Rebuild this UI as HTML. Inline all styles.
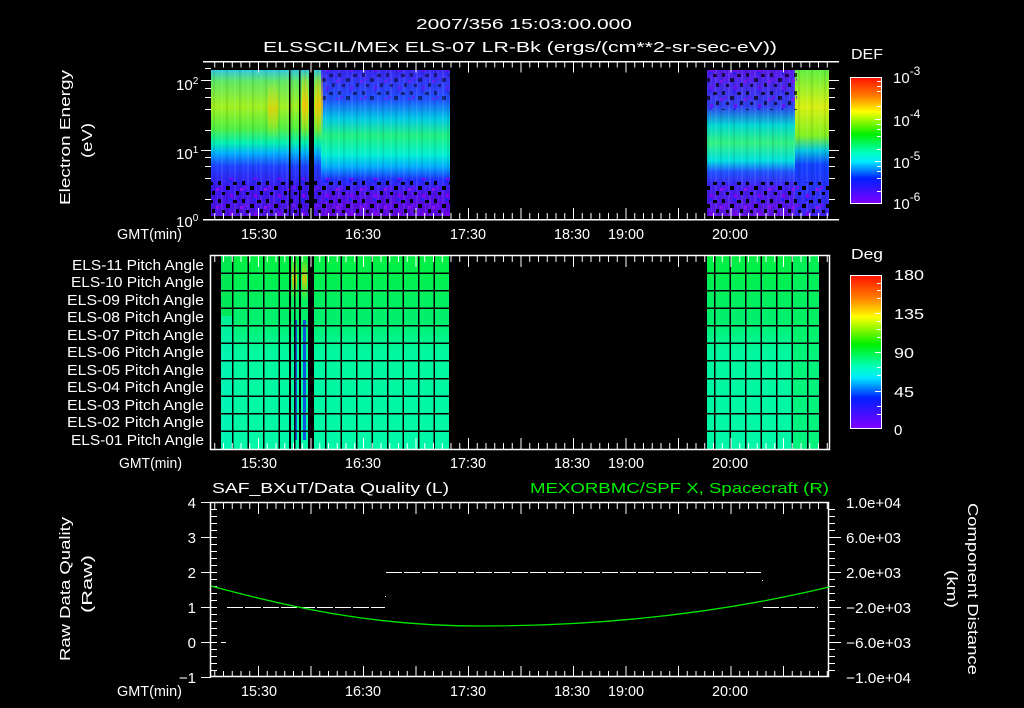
<!DOCTYPE html>
<html><head><meta charset="utf-8"><style>
html,body{margin:0;padding:0;background:#000;width:1024px;height:708px;overflow:hidden}
svg{display:block}
text{font-family:"Liberation Sans",sans-serif;fill:#fff;font-size:15px}
</style></head><body>
<svg width="1024" height="708" viewBox="0 0 1024 708">
<defs>
<linearGradient id="cb" x1="0" y1="0" x2="0" y2="1">
<stop offset="0" stop-color="#ff1000"/><stop offset="0.15" stop-color="#ff8000"/><stop offset="0.27" stop-color="#ffff00"/><stop offset="0.45" stop-color="#00f000"/><stop offset="0.6" stop-color="#00ffc0"/><stop offset="0.67" stop-color="#00e8ff"/><stop offset="0.8" stop-color="#0020ff"/><stop offset="1" stop-color="#8000ff"/>
</linearGradient>
<linearGradient id="gA" x1="0" y1="0" x2="0" y2="1">
<stop offset="0" stop-color="#30c8e0"/><stop offset="0.08" stop-color="#60e860"/><stop offset="0.25" stop-color="#a0f020"/><stop offset="0.4" stop-color="#50f040"/><stop offset="0.5" stop-color="#00f0b0"/><stop offset="0.57" stop-color="#00b0ff"/><stop offset="0.66" stop-color="#2040ff"/><stop offset="0.8" stop-color="#3818f0"/><stop offset="1" stop-color="#5010e0"/>
</linearGradient>
<linearGradient id="gB" x1="0" y1="0" x2="0" y2="1">
<stop offset="0" stop-color="#3a28f0"/><stop offset="0.2" stop-color="#2050ff"/><stop offset="0.33" stop-color="#00c8e8"/><stop offset="0.45" stop-color="#20f080"/><stop offset="0.58" stop-color="#00f0d0"/><stop offset="0.66" stop-color="#00b0ff"/><stop offset="0.75" stop-color="#2030ff"/><stop offset="0.85" stop-color="#5010e8"/><stop offset="1" stop-color="#6008e0"/>
</linearGradient>
<linearGradient id="gC" x1="0" y1="0" x2="0" y2="1">
<stop offset="0" stop-color="#5818e8"/><stop offset="0.25" stop-color="#3040f0"/><stop offset="0.38" stop-color="#00d8d0"/><stop offset="0.5" stop-color="#30f080"/><stop offset="0.62" stop-color="#00e0e0"/><stop offset="0.7" stop-color="#2050ff"/><stop offset="0.8" stop-color="#4020f0"/><stop offset="1" stop-color="#6010e0"/>
</linearGradient>
<linearGradient id="gD" x1="0" y1="0" x2="0" y2="1">
<stop offset="0" stop-color="#60f040"/><stop offset="0.25" stop-color="#d8f010"/><stop offset="0.45" stop-color="#80f020"/><stop offset="0.55" stop-color="#00c8e0"/><stop offset="0.65" stop-color="#1040ff"/><stop offset="1" stop-color="#4020f0"/>
</linearGradient>
<linearGradient id="hot" x1="0" y1="0" x2="0" y2="1">
<stop offset="0" stop-color="#ffe000" stop-opacity="0"/><stop offset="0.5" stop-color="#ffc000" stop-opacity="0.8"/><stop offset="1" stop-color="#ffe000" stop-opacity="0"/>
</linearGradient>
<linearGradient id="pa" x1="0" y1="0" x2="0" y2="1">
<stop offset="0" stop-color="#00f040"/><stop offset="0.35" stop-color="#00f070"/><stop offset="0.5" stop-color="#00f8a0"/><stop offset="1" stop-color="#00f8a8"/>
</linearGradient>
<pattern id="str" x="0" y="0" width="13" height="10" patternUnits="userSpaceOnUse">
<rect x="0" y="0" width="2" height="10" fill="#fff" opacity="0.08"/><rect x="5" y="0" width="2" height="10" fill="#000" opacity="0.08"/><rect x="9" y="0" width="1" height="10" fill="#fff" opacity="0.06"/>
</pattern>
<pattern id="spk" x="0" y="0" width="24" height="18" patternUnits="userSpaceOnUse">
<rect x="2" y="1" width="3" height="4" fill="#000"/><rect x="10" y="6" width="4" height="4" fill="#000"/><rect x="17" y="2" width="4" height="3" fill="#000"/><rect x="6" y="12" width="3" height="3" fill="#000"/><rect x="20" y="11" width="3" height="4" fill="#000"/><rect x="14" y="14" width="3" height="4" fill="#8000f0"/><rect x="0" y="8" width="3" height="3" fill="#9010f0"/><rect x="13" y="0" width="3" height="3" fill="#2020f0"/><rect x="4" y="6" width="3" height="3" fill="#7010f0"/>
</pattern>
</defs>

<text x="416" y="29" textLength="216" lengthAdjust="spacingAndGlyphs" font-size="16">2007/356 15:03:00.000</text>
<text x="263" y="52" textLength="514" lengthAdjust="spacingAndGlyphs" font-size="16">ELSSCIL/MEx ELS-07 LR-Bk  (ergs/(cm**2-sr-sec-eV))</text>

<!-- top spectrogram -->
<rect x="211" y="70" width="110" height="146" fill="url(#gA)"/>
<rect x="321" y="70" width="129" height="146" fill="url(#gB)"/>
<rect x="211" y="70" width="239" height="146" fill="url(#str)"/>
<rect x="211" y="178" width="239" height="38" fill="url(#spk)"/>
<rect x="321" y="70" width="129" height="30" fill="url(#spk)" opacity="0.5"/>
<rect x="268" y="80" width="10" height="60" fill="url(#hot)" opacity="0.7"/>
<rect x="302" y="70" width="6" height="70" fill="url(#hot)"/>
<rect x="315" y="70" width="8" height="70" fill="url(#hot)"/>
<rect x="289" y="70" width="1.5" height="146" fill="#000"/>
<rect x="299" y="70" width="1.5" height="146" fill="#000"/>
<rect x="309" y="70" width="5" height="146" fill="#000"/>
<rect x="707" y="70" width="88" height="146" fill="url(#gC)"/>
<rect x="795" y="70" width="34" height="146" fill="url(#gD)"/>
<rect x="707" y="70" width="122" height="146" fill="url(#str)"/>
<rect x="707" y="70" width="90" height="40" fill="url(#spk)" opacity="0.7"/>
<rect x="707" y="182" width="122" height="34" fill="url(#spk)"/>
<!-- top axes -->
<g fill="#fff">
<rect x="203" y="61" width="636" height="1.5"/>
<rect x="203" y="219" width="636" height="1.5"/>
</g>
<g stroke="#fff" fill="none">
<path d="M214.25 64.5 H830" stroke-width="6" stroke-dasharray="1 7.75"/>
<path d="M258 67 H830" stroke-width="11" stroke-dasharray="1 51.5"/>
<path d="M214.25 216 H830" stroke-width="6" stroke-dasharray="1 7.75"/>
<path d="M258 213.5 H830" stroke-width="11" stroke-dasharray="1 51.5"/>
</g>
<g fill="#fff">
<rect x="201" y="80" width="10" height="1"/><rect x="205" y="68" width="6" height="1"/><rect x="205" y="88" width="6" height="1"/><rect x="205" y="97" width="6" height="1"/><rect x="205" y="109" width="6" height="1"/><rect x="205" y="130" width="6" height="1"/>
<rect x="201" y="150" width="10" height="1"/><rect x="205" y="157" width="6" height="1"/><rect x="205" y="166" width="6" height="1"/><rect x="205" y="178" width="6" height="1"/><rect x="205" y="199" width="6" height="1"/>
<rect x="829" y="80" width="10" height="1"/><rect x="829" y="88" width="6" height="1"/><rect x="829" y="97" width="6" height="1"/><rect x="829" y="109" width="6" height="1"/><rect x="829" y="130" width="6" height="1"/>
<rect x="829" y="150" width="10" height="1"/><rect x="829" y="157" width="6" height="1"/><rect x="829" y="166" width="6" height="1"/><rect x="829" y="178" width="6" height="1"/><rect x="829" y="199" width="6" height="1"/>
</g>
<text x="176" y="90" font-size="14">10<tspan dy="-6" font-size="10">2</tspan></text>
<text x="176" y="159" font-size="14">10<tspan dy="-6" font-size="10">1</tspan></text>
<text x="176" y="227" font-size="14">10<tspan dy="-6" font-size="10">0</tspan></text>
<text transform="translate(70,205) rotate(-90)" textLength="135" lengthAdjust="spacingAndGlyphs">Electron Energy</text>
<text transform="translate(92,158) rotate(-90)" textLength="35" lengthAdjust="spacingAndGlyphs">(eV)</text>
<g>
<text x="117" y="239" textLength="65" lengthAdjust="spacingAndGlyphs">GMT(min)</text>
<text x="241" y="239" textLength="36" lengthAdjust="spacingAndGlyphs">15:30</text><text x="345" y="239" textLength="36" lengthAdjust="spacingAndGlyphs">16:30</text><text x="450" y="239" textLength="36" lengthAdjust="spacingAndGlyphs">17:30</text><text x="554" y="239" textLength="36" lengthAdjust="spacingAndGlyphs">18:30</text><text x="608" y="239" textLength="36" lengthAdjust="spacingAndGlyphs">19:00</text><text x="712" y="239" textLength="36" lengthAdjust="spacingAndGlyphs">20:00</text>
</g>
<!-- DEF colorbar -->
<text x="851" y="59" textLength="32" lengthAdjust="spacingAndGlyphs" font-size="16">DEF</text>
<rect x="850.5" y="77.5" width="31" height="126" fill="url(#cb)" stroke="#fff" stroke-width="1"/>
<g fill="#fff"><rect x="877" y="81" width="4" height="1"/><rect x="877" y="86" width="4" height="1"/><rect x="877" y="91" width="4" height="1"/><rect x="877" y="106" width="4" height="1"/><rect x="875" y="119" width="6" height="1"/><rect x="877" y="124" width="4" height="1"/><rect x="877" y="129" width="4" height="1"/><rect x="877" y="136" width="4" height="1"/><rect x="877" y="149" width="4" height="1"/><rect x="875" y="161" width="6" height="1"/><rect x="877" y="166" width="4" height="1"/><rect x="877" y="171" width="4" height="1"/><rect x="877" y="178" width="4" height="1"/><rect x="877" y="191" width="4" height="1"/></g>
<g font-size="16"><text x="893" y="83">10<tspan dy="-8" font-size="12">-3</tspan></text>
<text x="893" y="126">10<tspan dy="-8" font-size="12">-4</tspan></text>
<text x="893" y="168">10<tspan dy="-8" font-size="12">-5</tspan></text>
<text x="893" y="209">10<tspan dy="-8" font-size="12">-6</tspan></text></g>

<!-- pitch angle panel -->
<rect x="221" y="256" width="228" height="193" fill="url(#pa)"/>
<rect x="221" y="256" width="12" height="193" fill="#00f0c0" opacity="0.5"/>
<rect x="221" y="256" width="12" height="60" fill="#00e020" opacity="0.5"/>
<rect x="707" y="256" width="112" height="193" fill="url(#pa)"/>
<rect x="792" y="256" width="27" height="193" fill="#00f060" opacity="0.6"/>
<rect x="292" y="256" width="5" height="45" fill="url(#hot)"/><rect x="302" y="256" width="5" height="45" fill="url(#hot)"/>
<rect x="294" y="320" width="3" height="120" fill="#1030f0" opacity="0.8"/><rect x="303" y="320" width="3" height="120" fill="#1030f0" opacity="0.8"/>
<rect x="289" y="256" width="2" height="193" fill="#000"/><rect x="299" y="256" width="2" height="193" fill="#000"/><rect x="308" y="256" width="6" height="193" fill="#000"/>
<!-- grid -->
<g stroke="#000" fill="none">
<path d="M232 352.5 H449" stroke-width="193" stroke-dasharray="1.5 14"/>
<path d="M714 352.5 H819" stroke-width="193" stroke-dasharray="1.5 14"/>
</g>
<g fill="#000">
<rect x="221" y="272.5" width="228" height="1.5"/><rect x="221" y="290" width="228" height="1.5"/><rect x="221" y="307.5" width="228" height="1.5"/><rect x="221" y="325" width="228" height="1.5"/><rect x="221" y="342.5" width="228" height="1.5"/><rect x="221" y="360" width="228" height="1.5"/><rect x="221" y="378" width="228" height="1.5"/><rect x="221" y="395.5" width="228" height="1.5"/><rect x="221" y="413" width="228" height="1.5"/><rect x="221" y="430.5" width="228" height="1.5"/>
<rect x="707" y="272.5" width="112" height="1.5"/><rect x="707" y="290" width="112" height="1.5"/><rect x="707" y="307.5" width="112" height="1.5"/><rect x="707" y="325" width="112" height="1.5"/><rect x="707" y="342.5" width="112" height="1.5"/><rect x="707" y="360" width="112" height="1.5"/><rect x="707" y="378" width="112" height="1.5"/><rect x="707" y="395.5" width="112" height="1.5"/><rect x="707" y="413" width="112" height="1.5"/><rect x="707" y="430.5" width="112" height="1.5"/>
</g>
<rect x="210.5" y="255.5" width="619" height="194" fill="none" stroke="#fff" stroke-width="1.5"/>
<g stroke="#fff" fill="none">
<path d="M214.25 259 H829" stroke-width="6" stroke-dasharray="1 7.75"/>
<path d="M258 261.5 H829" stroke-width="11" stroke-dasharray="1 51.5"/>
<path d="M214.25 446 H829" stroke-width="6" stroke-dasharray="1 7.75"/>
<path d="M258 443.5 H829" stroke-width="11" stroke-dasharray="1 51.5"/>
</g>
<g text-anchor="start">
<text x="72" y="270" textLength="132" lengthAdjust="spacingAndGlyphs">ELS-11 Pitch Angle</text><text x="71" y="287" textLength="133" lengthAdjust="spacingAndGlyphs">ELS-10 Pitch Angle</text><text x="67" y="305" textLength="137" lengthAdjust="spacingAndGlyphs">ELS-09 Pitch Angle</text><text x="67" y="322" textLength="137" lengthAdjust="spacingAndGlyphs">ELS-08 Pitch Angle</text><text x="67" y="340" textLength="137" lengthAdjust="spacingAndGlyphs">ELS-07 Pitch Angle</text><text x="67" y="357" textLength="137" lengthAdjust="spacingAndGlyphs">ELS-06 Pitch Angle</text><text x="67" y="375" textLength="137" lengthAdjust="spacingAndGlyphs">ELS-05 Pitch Angle</text><text x="67" y="392" textLength="137" lengthAdjust="spacingAndGlyphs">ELS-04 Pitch Angle</text><text x="67" y="410" textLength="137" lengthAdjust="spacingAndGlyphs">ELS-03 Pitch Angle</text><text x="67" y="427" textLength="137" lengthAdjust="spacingAndGlyphs">ELS-02 Pitch Angle</text><text x="71" y="445" textLength="133" lengthAdjust="spacingAndGlyphs">ELS-01 Pitch Angle</text>
</g>
<g>
<text x="119" y="468" textLength="63" lengthAdjust="spacingAndGlyphs">GMT(min)</text>
<text x="241" y="468" textLength="36" lengthAdjust="spacingAndGlyphs">15:30</text><text x="345" y="468" textLength="36" lengthAdjust="spacingAndGlyphs">16:30</text><text x="450" y="468" textLength="36" lengthAdjust="spacingAndGlyphs">17:30</text><text x="554" y="468" textLength="36" lengthAdjust="spacingAndGlyphs">18:30</text><text x="608" y="468" textLength="36" lengthAdjust="spacingAndGlyphs">19:00</text><text x="712" y="468" textLength="36" lengthAdjust="spacingAndGlyphs">20:00</text>
</g>
<text x="851" y="259" textLength="32" lengthAdjust="spacingAndGlyphs" font-size="16">Deg</text>
<rect x="850.5" y="275.5" width="31" height="153" fill="url(#cb)" stroke="#fff" stroke-width="1"/>
<g fill="#fff"><rect x="877" y="283" width="4" height="1"/><rect x="877" y="290" width="4" height="1"/><rect x="877" y="298" width="4" height="1"/><rect x="875" y="313" width="6" height="1"/><rect x="877" y="321" width="4" height="1"/><rect x="877" y="329" width="4" height="1"/><rect x="877" y="337" width="4" height="1"/><rect x="875" y="352" width="6" height="1"/><rect x="877" y="367" width="4" height="1"/><rect x="877" y="375" width="4" height="1"/><rect x="875" y="391" width="6" height="1"/><rect x="877" y="406" width="4" height="1"/><rect x="877" y="414" width="4" height="1"/></g>
<g font-size="17"><text x="894" y="280" textLength="30" lengthAdjust="spacingAndGlyphs">180</text><text x="894" y="319" textLength="30" lengthAdjust="spacingAndGlyphs">135</text><text x="894" y="358" textLength="20" lengthAdjust="spacingAndGlyphs">90</text><text x="894" y="397" textLength="20" lengthAdjust="spacingAndGlyphs">45</text><text x="894" y="435">0</text></g>

<!-- bottom panel -->
<text x="212" y="493" textLength="237" lengthAdjust="spacingAndGlyphs" font-size="16">SAF_BXuT/Data Quality (L)</text>
<text x="530" y="493" textLength="299" lengthAdjust="spacingAndGlyphs" font-size="16" style="fill:#00f000">MEXORBMC/SPF X, Spacecraft (R)</text>
<rect x="210.5" y="502.5" width="618" height="174" fill="none" stroke="#fff" stroke-width="1.5"/>
<g stroke="#fff" fill="none">
<path d="M214.25 506 H829" stroke-width="6" stroke-dasharray="1 7.75"/>
<path d="M258 508.5 H829" stroke-width="11" stroke-dasharray="1 51.5"/>
<path d="M214.25 674 H829" stroke-width="6" stroke-dasharray="1 7.75"/>
<path d="M258 671.5 H829" stroke-width="11" stroke-dasharray="1 51.5"/>
<path d="M214 509 V677" stroke-width="6" stroke-dasharray="1 6"/>
<path d="M832 509 V677" stroke-width="6" stroke-dasharray="1 6"/>
</g>
<g fill="#fff">
<rect x="201" y="502" width="10" height="1"/><rect x="201" y="537" width="10" height="1"/><rect x="201" y="572" width="10" height="1"/><rect x="201" y="607" width="10" height="1"/><rect x="201" y="642" width="10" height="1"/><rect x="201" y="677" width="10" height="1"/>
<rect x="829" y="537" width="12" height="1"/><rect x="829" y="572" width="12" height="1"/><rect x="829" y="607" width="12" height="1"/><rect x="829" y="642" width="12" height="1"/></g>
<g text-anchor="end"><text x="196" y="508">4</text><text x="196" y="543">3</text><text x="196" y="578">2</text><text x="196" y="613">1</text><text x="196" y="648">0</text><text x="196" y="683">−1</text></g>
<g><text x="846" y="508" textLength="55" lengthAdjust="spacingAndGlyphs">1.0e+04</text><text x="846" y="543" textLength="55" lengthAdjust="spacingAndGlyphs">6.0e+03</text><text x="846" y="578" textLength="55" lengthAdjust="spacingAndGlyphs">2.0e+03</text><text x="846" y="613" textLength="65" lengthAdjust="spacingAndGlyphs">−2.0e+03</text><text x="846" y="648" textLength="65" lengthAdjust="spacingAndGlyphs">−6.0e+03</text><text x="846" y="683" textLength="65" lengthAdjust="spacingAndGlyphs">−1.0e+04</text></g>
<path d="M227 607.5 H385 M386 572.5 H761 M763 607.5 H818 M221 642.5 H226" stroke="#fff" stroke-width="1" stroke-dasharray="16 2" fill="none"/>
<rect x="385" y="596" width="1" height="1" fill="#fff"/><rect x="762" y="580" width="1" height="1" fill="#fff"/>
<path d="M211 586 C 300 610, 380 626, 480 626 S 700 618, 829 587" stroke="#00e800" stroke-width="1.3" fill="none"/>
<text transform="translate(70,661) rotate(-90)" textLength="144" lengthAdjust="spacingAndGlyphs">Raw Data Quality</text>
<text transform="translate(92,613) rotate(-90)" textLength="58" lengthAdjust="spacingAndGlyphs">(Raw)</text>
<text transform="translate(968,503) rotate(90)" textLength="172" lengthAdjust="spacingAndGlyphs">Component Distance</text>
<text transform="translate(947,570) rotate(90)" textLength="38" lengthAdjust="spacingAndGlyphs">(km)</text>
<g>
<text x="117" y="696" textLength="65" lengthAdjust="spacingAndGlyphs">GMT(min)</text>
<text x="241" y="696" textLength="36" lengthAdjust="spacingAndGlyphs">15:30</text><text x="345" y="696" textLength="36" lengthAdjust="spacingAndGlyphs">16:30</text><text x="450" y="696" textLength="36" lengthAdjust="spacingAndGlyphs">17:30</text><text x="554" y="696" textLength="36" lengthAdjust="spacingAndGlyphs">18:30</text><text x="608" y="696" textLength="36" lengthAdjust="spacingAndGlyphs">19:00</text><text x="712" y="696" textLength="36" lengthAdjust="spacingAndGlyphs">20:00</text>
</g>
</svg>
</body></html>
